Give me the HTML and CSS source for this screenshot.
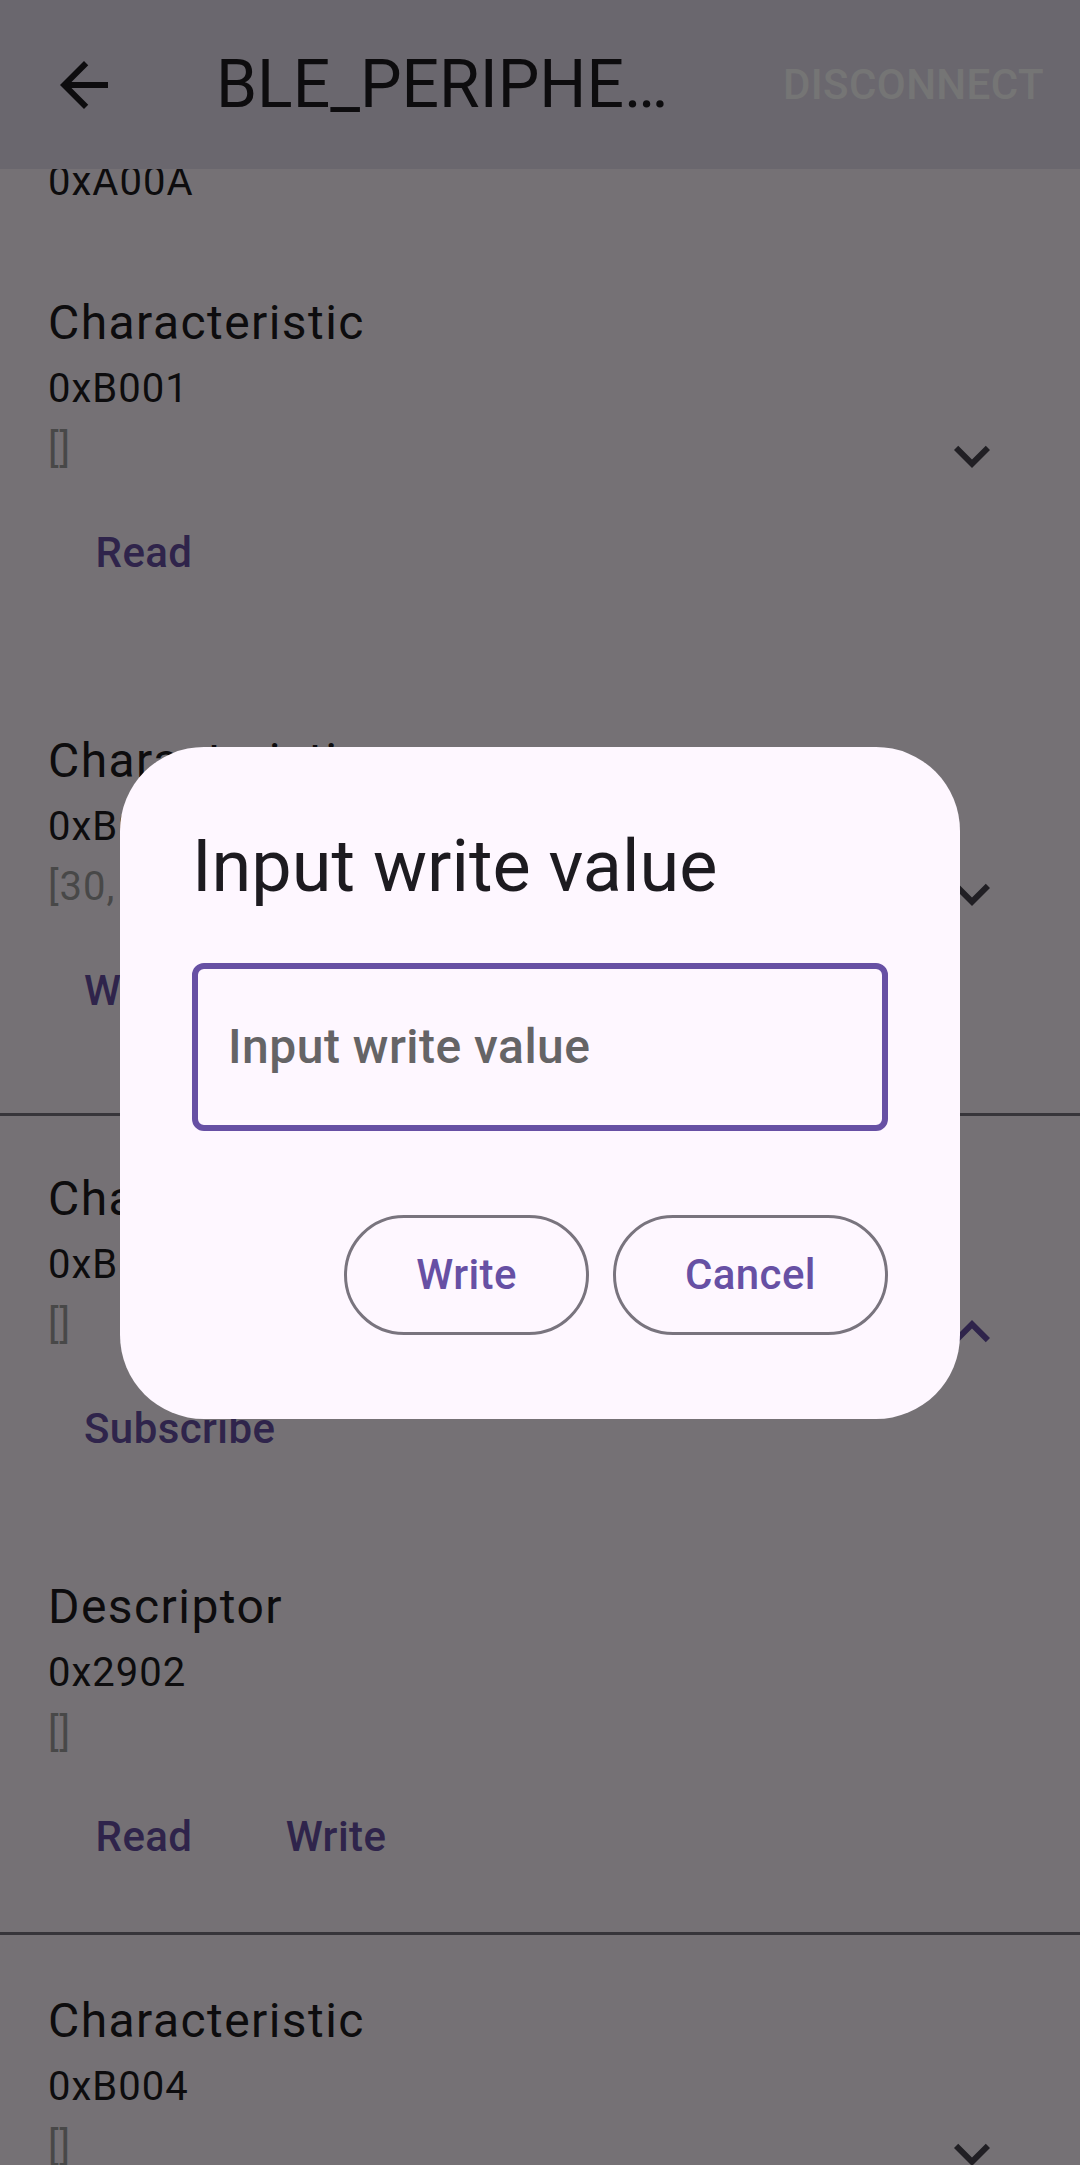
FILE: index.html
```html
<!DOCTYPE html>
<html lang="en">
<head>
<meta charset="utf-8">
<meta name="viewport" content="width=device-width, initial-scale=1">
<title>BLE_PERIPHERAL</title>
<link rel="stylesheet" href="styles.css">
</head>
<body>
<div class="screen">
  <header class="app-bar">
    <button class="icon-button" type="button" aria-label="Back">
      <svg class="icon" viewBox="0 0 24 24" aria-hidden="true"><path d="M20 11H7.83l5.59-5.59L12 4l-8 8 8 8 1.41-1.41L7.83 13H20v-2z"/></svg>
    </button>
    <h1 class="app-title">BLE_PERIPHERAL</h1>
    <button class="text-button disconnect" type="button">DISCONNECT</button>
  </header>

  <main class="services">
    <p class="service-uuid uuid">0xA00A</p>

    <section class="tile">
      <div class="tile-header">
        <div class="tile-body">
          <h2 class="name">Characteristic</h2>
          <p class="uuid">0xB001</p>
          <p class="uuid value">[]</p>
          <div class="actions"><button class="text-button" type="button">Read</button></div>
        </div>
        <button class="icon-button" type="button" aria-label="Expand">
          <svg class="icon" viewBox="0 0 24 24" aria-hidden="true"><path d="M16.59 8.59L12 13.17 7.41 8.59 6 10l6 6 6-6z"/></svg>
        </button>
      </div>
    </section>

    <section class="tile">
      <div class="tile-header">
        <div class="tile-body">
          <h2 class="name">Characteristic</h2>
          <p class="uuid">0xB002</p>
          <p class="uuid value">[30, 31]</p>
          <div class="actions"><button class="text-button" type="button">Write Without Response</button></div>
        </div>
        <button class="icon-button" type="button" aria-label="Expand">
          <svg class="icon" viewBox="0 0 24 24" aria-hidden="true"><path d="M16.59 8.59L12 13.17 7.41 8.59 6 10l6 6 6-6z"/></svg>
        </button>
      </div>
    </section>

    <section class="tile tile-open">
      <div class="tile-header">
        <div class="tile-body">
          <h2 class="name">Characteristic</h2>
          <p class="uuid">0xB003</p>
          <p class="uuid value">[]</p>
          <div class="actions"><button class="text-button" type="button">Subscribe</button></div>
        </div>
        <button class="icon-button" type="button" aria-label="Collapse">
          <svg class="icon" viewBox="0 0 24 24" aria-hidden="true"><path d="M7.41 15.41L12 10.83l4.59 4.58L18 14l-6-6-6 6z"/></svg>
        </button>
      </div>
      <div class="descriptor">
        <h3 class="name">Descriptor</h3>
        <p class="uuid">0x2902</p>
        <p class="uuid value">[]</p>
        <div class="actions">
          <button class="text-button" type="button">Read</button>
          <button class="text-button" type="button">Write</button>
        </div>
      </div>
    </section>

    <section class="tile">
      <div class="tile-header">
        <div class="tile-body">
          <h2 class="name">Characteristic</h2>
          <p class="uuid">0xB004</p>
          <p class="uuid value">[]</p>
          <div class="actions"><button class="text-button" type="button">Read</button></div>
        </div>
        <button class="icon-button" type="button" aria-label="Expand">
          <svg class="icon" viewBox="0 0 24 24" aria-hidden="true"><path d="M16.59 8.59L12 13.17 7.41 8.59 6 10l6 6 6-6z"/></svg>
        </button>
      </div>
    </section>
  </main>
</div>

<div class="scrim">
  <form class="dialog" role="dialog" aria-modal="true" aria-labelledby="dialog-title">
    <h2 class="dialog-title" id="dialog-title">Input write value</h2>
    <input class="field" type="text" placeholder="Input write value" aria-labelledby="dialog-title">
    <div class="dialog-actions">
      <button class="outlined-button" type="button">Write</button>
      <button class="outlined-button" type="button">Cancel</button>
    </div>
  </form>
</div>
</body>
</html>
```
FILE: styles.css
```css
:root {
  --surface: #fef7ff;
  --bar: #e6e0ef;
  --on-surface: #1d1b20;
  --on-surface-variant: #49454f;
  --primary: #6750a4;
  --outline: #79747e;
  --muted: #9e9e9e;
}

* {
  box-sizing: border-box;
}

body {
  margin: 0;
  background: var(--surface);
  color: var(--on-surface);
  font-family: Roboto, "Noto Sans", sans-serif;
}

h1, h2, h3, p {
  margin: 0;
  font-weight: 400;
}

button {
  margin: 0;
  border: 0;
  background: none;
  color: var(--primary);
  font: 500 42px/48px Roboto, "Noto Sans", sans-serif;
  letter-spacing: 0.01em;
  cursor: pointer;
}

.screen {
  display: flex;
  flex-direction: column;
  height: 100vh;
  overflow: hidden;
}

/* App bar */
.app-bar {
  display: flex;
  align-items: center;
  flex: none;
  height: 169px;
  padding-left: 48px;
  background: var(--bar);
}

.app-bar .icon-button {
  color: var(--on-surface);
}

.app-title {
  flex: 1;
  min-width: 0;
  margin: 0 48px 0 96px;
  overflow: hidden;
  font-size: 66px;
  line-height: 84px;
  text-overflow: ellipsis;
  white-space: nowrap;
}

.icon-button {
  flex: none;
  width: 72px;
  height: 72px;
  padding: 0;
  color: var(--on-surface-variant);
}

.icon {
  display: block;
  width: 72px;
  height: 72px;
  fill: currentColor;
}

.text-button {
  min-width: 192px;
  height: 144px;
  padding: 0 36px;
}

.disconnect {
  color: #fff;
}

/* Attribute list */
.services {
  flex: 1;
  min-height: 0;
  overflow: hidden;
}

.service-uuid {
  margin: -17px 48px 25px;
}

.tile {
  border: solid transparent;
  border-width: 3px 0;
}

.tile-open {
  border-color: var(--outline);
}

.tile-open .icon-button {
  color: var(--primary);
}

.tile-header {
  display: flex;
  align-items: center;
  padding: 47px 72px 47px 48px;
}

.tile-body {
  flex: 1;
}

.descriptor {
  padding: 23px 48px;
}

.name {
  font-size: 48px;
  line-height: 72px;
  letter-spacing: 0.03em;
}

.uuid {
  font-size: 40px;
  line-height: 60px;
  letter-spacing: 1px;
}

.value {
  color: var(--muted);
}

.actions {
  display: flex;
  margin-top: 2px;
}

/* Dialog */
.scrim {
  position: fixed;
  inset: 0;
  display: flex;
  align-items: center;
  justify-content: center;
  padding: 0 120px;
  background: rgba(0, 0, 0, 0.54);
}

.dialog {
  display: flex;
  flex-direction: column;
  width: 100%;
  max-width: 1680px;
  padding: 72px 72px 84px;
  border-radius: 84px;
  background: var(--surface);
}

.dialog-title {
  margin-bottom: 48px;
  font-size: 72px;
  line-height: 96px;
}

.field {
  width: 100%;
  height: 168px;
  padding: 0 30px;
  border: 6px solid var(--primary);
  border-radius: 12px;
  outline: 0;
  background: transparent;
  color: var(--on-surface);
  font: 500 48px/72px Roboto, "Noto Sans", sans-serif;
  letter-spacing: 0.01em;
}

.field::placeholder {
  color: #656466;
  opacity: 1;
}

.dialog-actions {
  display: flex;
  justify-content: flex-end;
  gap: 24px;
  margin-top: 84px;
}

.outlined-button {
  height: 120px;
  padding: 0 69px;
  border: 3px solid var(--outline);
  border-radius: 60px;
}
```
